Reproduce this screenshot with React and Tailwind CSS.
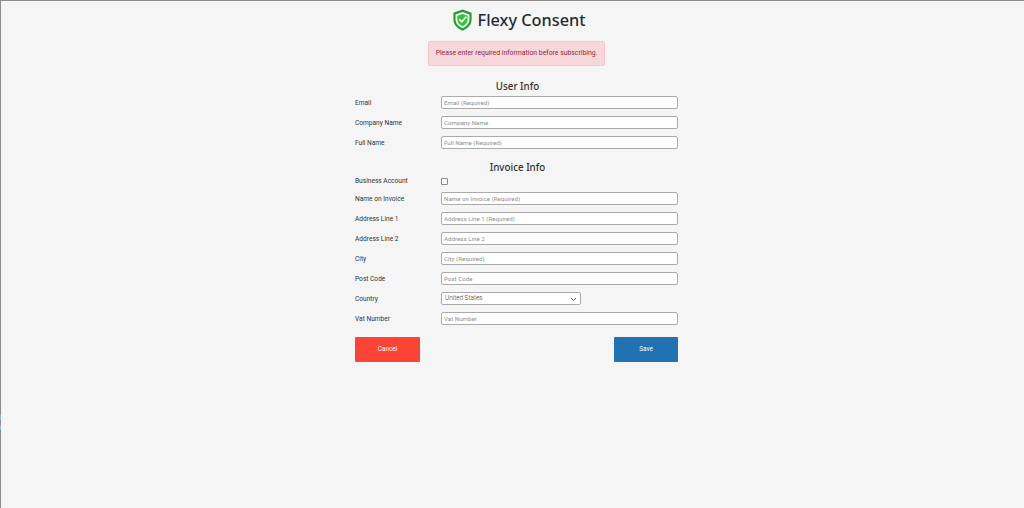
import React from 'react';

const Shield = () => (
  <svg width="21" height="24" viewBox="0 0 22 24" className="shrink-0">
    <path d="M11 1 L20.5 4.5 V11.5 C20.5 17 16.5 21 11 23.2 C5.5 21 1.5 17 1.5 11.5 V4.5 Z" fill="#1f9d2c" />
    <path d="M11 3.6 L18.3 6.2 V11.6 C18.3 15.8 15.3 18.8 11 20.7 C6.7 18.8 3.7 15.8 3.7 11.6 V6.2 Z" fill="#f5f9f5" />
    <path d="M11 5.6 L16.4 7.5 V11.6 C16.4 14.8 14.2 17 11 18.5 C7.8 17 5.6 14.8 5.6 11.6 V7.5 Z" fill="#35c23f" />
    <path d="M7.6 11.2 L10.2 13.8 L15 8.6" fill="none" stroke="#ffffff" strokeWidth="1.8" />
  </svg>
);

const Field = ({ label, placeholder }) => (
  <div className="flex items-center h-[20px]">
    <label className="w-[86px] shrink-0 pt-[3px] text-[6.6px] text-[#333]">{label}</label>
    <input
      placeholder={placeholder}
      className="w-[237px] h-[13px] bg-white border border-[#ababab] rounded-[2px] px-[2px] pt-[1px] text-[6.2px] text-[#333] placeholder:text-[#8f8f8f] outline-none"
    />
  </div>
);

const invoiceFields = [
  ['Name on Invoice', 'Name on Invoice (Required)'],
  ['Address Line 1', 'Address Line 1 (Required)'],
  ['Address Line 2', 'Address Line 2'],
  ['City', 'City (Required)'],
  ['Post Code', 'Post Code'],
];

export default function App() {
  return (
    <div className="relative w-[1024px] h-[508px] bg-[#f5f5f5] border-t border-l border-[#8c8c8c] font-['Roboto','Open_Sans',sans-serif] text-[#333]">
      {/* stray marks on the left edge of the window */}
      <div className="absolute left-[-1px] top-[414px] w-[1px] h-[5px] bg-[#7db8e8]" />
      <div className="absolute left-[-1px] top-[424px] w-[1px] h-[5px] bg-[#7db8e8]" />

      <div className="flex items-center justify-center gap-[5px] h-[38px] mb-[2px] pl-[12px]">
        <Shield />
        <h1 className="font-['Noto_Sans',sans-serif] text-[16.3px] leading-none font-medium text-[#1f2b38]">Flexy Consent</h1>
      </div>

      <div className="flex justify-center pl-[8px]">
        <div className="w-[177px] h-[25px] flex items-center justify-center whitespace-nowrap bg-[#f8d7da] border border-[#f5c6cb] rounded-[2px] text-[6.85px] text-[#8a2a3a]">
          Please enter required information before subscribing.
        </div>
      </div>

      <div className="w-[323px] ml-[354px]">
        <h2 className="mt-[14px] h-[14px] font-['Noto_Sans',sans-serif] text-[9.8px] leading-[14px] font-medium text-center ml-[2px]">User Info</h2>
        <div className="mt-[-2px]">
          <Field label="Email" placeholder="Email (Required)" />
          <Field label="Company Name" placeholder="Company Name" />
          <Field label="Full Name" placeholder="Full Name (Required)" />
        </div>

        <h2 className="mt-[9px] h-[14px] font-['Noto_Sans',sans-serif] text-[9.8px] leading-[14px] font-medium text-center ml-[2px]">Invoice Info</h2>
        <div className="flex items-center h-[13px]">
          <label className="w-[86px] shrink-0 pt-[1px] text-[6.6px]">Business Account</label>
          <input type="checkbox" className="w-[7px] h-[7px] appearance-none bg-white border border-[#8a8a8a] rounded-[1px]" />
        </div>
        <div>
          {invoiceFields.map(([label, placeholder]) => (
            <Field key={label} label={label} placeholder={placeholder} />
          ))}
          <div className="flex items-center h-[20px]">
            <label className="w-[86px] shrink-0 pt-[3px] text-[6.6px]">Country</label>
            <div className="relative w-[140px] h-[13px] flex items-center bg-white border border-[#ababab] rounded-[2px] px-[3px] pt-[1px] text-[6.4px] font-light">
              United States
              <svg width="7" height="5" viewBox="0 0 7 5" className="absolute right-[3px] top-[4px]">
                <path d="M1 1 L3.5 3.5 L6 1" fill="none" stroke="#555" strokeWidth="1" />
              </svg>
            </div>
          </div>
          <Field label="Vat Number" placeholder="Vat Number" />
        </div>

        <div className="flex justify-between mt-[9px]">
          <button className="w-[65px] h-[25px] bg-[#fb4336] rounded-[1px] text-white text-[6.4px]">Cancel</button>
          <button className="w-[64px] h-[25px] bg-[#2271b1] rounded-[1px] text-white text-[6.4px]">Save</button>
        </div>
      </div>
    </div>
  );
}
